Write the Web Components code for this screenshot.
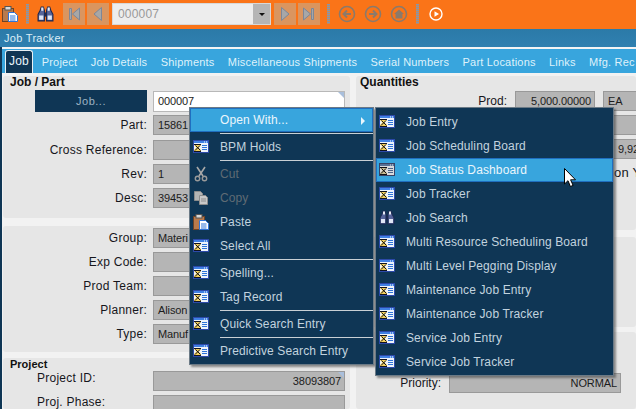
<!DOCTYPE html>
<html>
<head>
<meta charset="utf-8">
<title>Job Tracker</title>
<style>
  html, body { margin: 0; padding: 0; background: #e6e6e6; }
  body { font: 12px "Liberation Sans", Arial, sans-serif; overflow: hidden; }
</style>
</head>
<body>
<job-app>
  <job-toolbar slot="toolbar"></job-toolbar>
  <job-tabs slot="tabs" items="Job|Project|Job Details|Shipments|Miscellaneous Shipments|Serial Numbers|Part Locations|Links|Mfg. Rec"></job-tabs>

  <form-panel slot="left" heading="Job / Part" style="height:142px;margin-bottom:2px" rows="4.33" top="2">
    <field-row button="Job..." value="000007" kind="input"></field-row>
    <field-row label="Part:" value="15861"></field-row>
    <field-row label="Cross Reference:"></field-row>
    <field-row label="Rev:" value="1"></field-row>
    <field-row label="Desc:" value="39453"></field-row>
  </form-panel>
  <form-panel slot="left" style="height:126px" rows="4" top="2">
    <field-row label="Group:" value="Materi"></field-row>
    <field-row label="Exp Code:"></field-row>
    <field-row label="Prod Team:"></field-row>
    <field-row label="Planner:" value="Alison"></field-row>
    <field-row label="Type:" value="Manuf"></field-row>
  </form-panel>
  <form-panel slot="left" heading="Project" small style="flex:1" rows="4" top="1">
    <field-row label="Project ID:" value="38093807" align="right" flush></field-row>
    <field-row label="Proj. Phase:" flush></field-row>
  </form-panel>

  <form-panel slot="right" heading="Quantities" tight style="height:154px;margin-bottom:2px" rows="4" top="3">
    <qty-row label="Prod:" value="5,000.00000" uom="EA"></qty-row>
    <qty-row wide></qty-row>
    <qty-row wide text="9,92"></qty-row>
    <qty-row note="on Y"></qty-row>
  </form-panel>
  <form-panel slot="right" style="height:90px"></form-panel>
  <form-panel slot="right" style="flex:1" top="41">
    <qty-row label="Priority:" value="NORMAL" long></qty-row>
  </form-panel>

  <context-menu style="left:189px;top:107px;width:185px">
    <menu-item active arrow>Open With...</menu-item>
    <menu-sep></menu-sep>
    <menu-item icon="win">BPM Holds</menu-item>
    <menu-sep></menu-sep>
    <menu-item icon="cut" disabled>Cut</menu-item>
    <menu-item icon="copy" disabled>Copy</menu-item>
    <menu-item icon="paste">Paste</menu-item>
    <menu-item icon="win">Select All</menu-item>
    <menu-sep></menu-sep>
    <menu-item icon="win">Spelling...</menu-item>
    <menu-item icon="win">Tag Record</menu-item>
    <menu-sep></menu-sep>
    <menu-item icon="win">Quick Search Entry</menu-item>
    <menu-sep></menu-sep>
    <menu-item icon="win">Predictive Search Entry</menu-item>
  </context-menu>

  <context-menu style="left:375px;top:107px;width:239px" sub>
    <menu-item icon="win">Job Entry</menu-item>
    <menu-item icon="win">Job Scheduling Board</menu-item>
    <menu-item icon="win" active framed>Job Status Dashboard</menu-item>
    <menu-item icon="win">Job Tracker</menu-item>
    <menu-item icon="find">Job Search</menu-item>
    <menu-item icon="win">Multi Resource Scheduling Board</menu-item>
    <menu-item icon="win">Multi Level Pegging Display</menu-item>
    <menu-item icon="win">Maintenance Job Entry</menu-item>
    <menu-item icon="win">Maintenance Job Tracker</menu-item>
    <menu-item icon="win">Service Job Entry</menu-item>
    <menu-item icon="win">Service Job Tracker</menu-item>
  </context-menu>

  <mouse-cursor style="left:564px;top:168px"></mouse-cursor>
</job-app>

<script>
const FONT = '"Liberation Sans", Arial, sans-serif';

const ICONS = {
  win: `<rect x=".5" y="1.5" width="15" height="12" fill="#eef3fb" stroke="#2c49a8"/>
    <rect x="1" y="2" width="14" height="2" fill="#3f80e4"/>
    <path d="M11 3h1M13 3h1" stroke="#fff"/>
    <path d="M1 5h7v1L5.6 8.5 8 11v2H1v-2l2.4-2.5L1 6z" fill="#f3cf5a"/>
    <path d="M1 5.5h7M1 12.5h7M2.5 6.5l5 5M7 6.5l-5 5" stroke="#10131f" fill="none"/>
    <path d="M9 6.5h5M9 8.5h5M9 10.5h5" stroke="#2f74d8"/>`,
  cut: `<path d="M4 1l6 9M12 1L6 10" stroke="#a8a8a8" stroke-width="1.6" fill="none"/>
    <circle cx="4.5" cy="12.5" r="2.2" fill="none" stroke="#9a9a9a" stroke-width="1.4"/>
    <circle cx="11.5" cy="12.5" r="2.2" fill="none" stroke="#9a9a9a" stroke-width="1.4"/>`,
  copy: `<path d="M1.5 1.5h6l2 2v7h-8z" fill="#b4b4b4" stroke="#8c8c8c"/>
    <path d="M6.5 5.5h6l2 2v7h-8z" fill="#c8c8c8" stroke="#8c8c8c"/>
    <path d="M8 9h5M8 11h5" stroke="#8c8c8c"/>`,
  paste: `<rect x=".5" y="2.5" width="11" height="13" fill="#b97a4c" stroke="#6d4327"/>
    <rect x="3" y=".5" width="6" height="3.5" fill="#d8d8d8" stroke="#555"/>
    <path d="M6.5 6.5h6l3 3v6h-9z" fill="#fff" stroke="#2f74d8"/>
    <path d="M8 10h5.5M8 12h5.5M8 14h5.5" stroke="#2f74d8"/>`,
  find: `<path d="M3 4l1-3h2l1 3v10H1V8zM13 4l-1-3h-2L9 4v10h6V8z" fill="#56649a" stroke="#1d2850"/>
    <path d="M4 1.500h2v3H4zM10 1.500h2v3h-2z" fill="#e6eaf4"/>
    <path d="M7 6h2v4H7z" fill="#1d2850"/>
    <path d="M2 9h4v4H2zM10 9h4v4h-4z" fill="#dfe6f6"/>`
};

class AppIcon extends HTMLElement {
  connectedCallback() {
    const size = this.getAttribute('size') || 16;
    this.attachShadow({ mode: 'open' }).innerHTML = `
      <style>:host { display: block; width: ${size}px; height: ${size}px; } svg { display: block; }</style>
      <svg width="${size}" height="${size}" viewBox="0 0 16 16">${ICONS[this.getAttribute('name')] || ''}</svg>`;
  }
}

class JobApp extends HTMLElement {
  constructor() {
    super();
    this.attachShadow({ mode: 'open' }).innerHTML = `
      <style>
        :host { display: block; position: relative; width: 636px; height: 409px; overflow: hidden; font: 12px ${FONT}; background: #0f3655; }
        .frame { display: flex; flex-direction: column; height: 100%; }
        .title { height: 18px; line-height: 18px; padding-left: 4px; color: #dbeef8; font-size: 11px; letter-spacing: .3px;
                 background: linear-gradient(#2b7aa8, #3080b0); flex: none; box-sizing: border-box; }
        .body { flex: 1; min-height: 0; margin-left: 2px; display: flex; flex-direction: column; }
        .strip { height: 2px; background: #f4f4f4; flex: none; }
        .content { flex: 1; min-height: 0; display: flex; gap: 6px; background: #f2f2f2; padding: 3px 0 0 1px; overflow: hidden; }
        .col { display: flex; flex-direction: column; }
        .left { width: 347px; flex: none; gap: 6px; }
        .right { flex: 1; min-width: 0; gap: 5px; }
      </style>
      <div class="frame">
        <slot name="toolbar"></slot>
        <div class="title">Job Tracker</div>
        <div class="body">
          <div class="strip"></div>
          <slot name="tabs"></slot>
          <div class="content">
            <div class="col left"><slot name="left"></slot></div>
            <div class="col right"><slot name="right"></slot></div>
          </div>
        </div>
      </div>
      <slot></slot>`;
  }
}

class JobToolbar extends HTMLElement {
  constructor() {
    super();
    const nav = (d) => `<span class="nav"><svg width="16" height="18" viewBox="0 0 16 18">${d}</svg></span>`;
    const circ = (d) => `<svg class="c" width="18" height="18" viewBox="0 0 18 18"><circle cx="9" cy="9" r="7.500" fill="none" stroke="#8b7a6b" stroke-width="1.600"/>${d}</svg>`;
    this.attachShadow({ mode: 'open' }).innerHTML = `
      <style>
        :host { display: flex; align-items: center; height: 29px; flex: none; background: #fa7418; box-sizing: border-box; padding: 0 0 1px 2px; }
        .grip { width: 3px; height: 20px; flex: none; background: repeating-linear-gradient(#8495ad 0 1px, #c28a60 1px 2px); }
        .nav { width: 22px; height: 22px; flex: none; background: #da955f; display: flex; align-items: center; justify-content: center; }
        svg { display: block; flex: none; }
        .combo { width: 159px; height: 22px; flex: none; display: flex; box-sizing: border-box; background: #ededed; margin: 0 3px 0 3px; border: 1px solid #d8d8d8; }
        .combo span { flex: 1; line-height: 20px; padding-left: 5px; color: #999; letter-spacing: .2px; font-size: 12px; }
        .combo i { width: 17px; background: #b5b5b5; display: flex; align-items: center; justify-content: center; }
        .combo b { display: block; width: 0; height: 0; border: 3px solid transparent; border-top: 3px solid #111; border-bottom: 0; }
      </style>
      <app-icon name="paste" size="16"></app-icon>
      <span class="grip" style="margin-left:8px"></span>
      <app-icon name="find" size="17" style="margin-left:8px"></app-icon>
      <span style="width:9px;flex:none"></span>
      ${nav('<path d="M3.500 3.500h2v11h-2z" fill="#a7a7a7" stroke="#7d8798"/><path d="M13.500 3v12L6.500 9z" fill="#a7a7a7" stroke="#7d8798"/>')}
      <span style="width:2px;flex:none"></span>
      ${nav('<path d="M11.500 2.500v13L4 9z" fill="#a7a7a7" stroke="#7d8798"/>')}
      <span class="combo"><span>000007</span><i><b></b></i></span>
      ${nav('<path d="M4.500 2.500v13L12 9z" fill="#a7a7a7" stroke="#7d8798"/>')}
      <span style="width:2px;flex:none"></span>
      ${nav('<path d="M2.500 3v12L9.500 9z" fill="#a7a7a7" stroke="#7d8798"/><path d="M10.500 3.500h2v11h-2z" fill="#a7a7a7" stroke="#7d8798"/>')}
      <span class="grip" style="margin-left:7px"></span>
      <span style="width:8px;flex:none"></span>
      ${circ('<path d="M13 9H6M9 5.500 5.500 9 9 12.500" fill="none" stroke="#8b7a6b" stroke-width="2"/>')}
      <span style="width:8px;flex:none"></span>
      ${circ('<path d="M5 9h7M9 5.500 12.500 9 9 12.500" fill="none" stroke="#8b7a6b" stroke-width="2"/>')}
      <span style="width:8px;flex:none"></span>
      ${circ('<path d="M9 4.500 4 9h1.500v4.500h7V9H14z" fill="#8b7a6b"/>')}
      <span class="grip" style="margin-left:8px"></span>
      <span style="width:10px;flex:none"></span>
      <svg width="14" height="14" viewBox="0 0 14 14"><circle cx="7" cy="7" r="6" fill="none" stroke="#fff" stroke-width="1.400"/><path d="M5.500 4.200v5.600L10 7z" fill="#fff"/></svg>`;
  }
}

class JobTabs extends HTMLElement {
  connectedCallback() {
    const items = this.getAttribute('items').split('|');
    const root = this.attachShadow({ mode: 'open' });
    root.innerHTML = `
      <style>
        :host { display: flex; height: 24px; flex: none; background: #38a5dd; padding-left: 3px; overflow: hidden; white-space: nowrap; color: #dff2fb; font-size: 11px; letter-spacing: .2px; }
        span { padding: 0 6.700px; line-height: 27px; flex: none; }
        span.on { width: 28px; padding: 0; text-align: center; margin: 1px 2px 0 0; line-height: 20px; height: 23px; box-sizing: border-box; background: #0f3655; color: #eaf5fb;
                  border: 1px solid #e8f0f4; border-bottom: 0; border-radius: 3px 3px 0 0; font-size: 12px; }
      </style>
      ${items.map((t, i) => `<span class="${i === 0 ? 'on' : ''}">${t}</span>`).join('')}`;
  }
}

class FormPanel extends HTMLElement {
  connectedCallback() {
    const heading = this.getAttribute('heading');
    const gap = this.getAttribute('rows') || 4;
    const top = this.getAttribute('top') || 0;
    this.attachShadow({ mode: 'open' }).innerHTML = `
      <style>
        :host { display: block; background: #e6e6e6; border-radius: 3px; flex: none; overflow: hidden; box-sizing: border-box; color: #16161c; font-size: 12px; letter-spacing: .25px; }
        h3 { margin: 0; height: 12px; padding: 0 0 0 ${this.hasAttribute('tight') ? 4 : 7}px; font: bold ${this.hasAttribute('small') ? 11 : 12}px/12px ${FONT}; color: #111; letter-spacing: 0; }
        .rows { display: flex; flex-direction: column; gap: ${gap}px; margin-top: ${top}px; }
      </style>
      ${heading ? `<h3>${heading}</h3>` : ''}
      <div class="rows"><slot></slot></div>`;
  }
}

class FieldRow extends HTMLElement {
  connectedCallback() {
    const label = this.getAttribute('label') || '';
    const value = this.getAttribute('value') || '';
    const button = this.getAttribute('button');
    const input = this.getAttribute('kind') === 'input';
    const right = this.getAttribute('align') === 'right';
    const flush = this.hasAttribute('flush');
    this.attachShadow({ mode: 'open' }).innerHTML = `
      <style>
        :host { display: grid; grid-template-columns: 144px 192px; column-gap: 6px; height: ${input ? 21 : 20}px; align-items: stretch; }
        label { line-height: ${flush ? 14 : 20}px; text-align: ${flush ? 'left' : 'right'}; padding-left: ${flush ? 34 : 0}px; }
        button { margin: 0 0 0 32px; border: 0; padding: 0; background: #0f3655; color: #9db3c4; font: 11px ${FONT}; letter-spacing: .5px; height: 22px; }
        .f { position: relative; box-sizing: border-box; background: ${input ? '#fff' : '#b5b5b5'}; border: 1px solid ${input ? '#b8b8b8' : '#999'}; margin-top: ${input ? 1 : 0}px;
             font-size: 11px; letter-spacing: -.1px; line-height: 18px; padding: 0 3px 0 4px; overflow: hidden; white-space: nowrap; text-align: ${right ? 'right' : 'left'}; color: #1c1c1c; }
        .f.mark::after { content: ""; position: absolute; top: 0; right: 0; border: 3px solid #a9bfdc; border-left-color: transparent; border-bottom-color: transparent; }
      </style>
      ${button ? `<button>${button}</button>` : `<label>${label}</label>`}
      <div class="f ${input || right ? 'mark' : ''}">${value}</div>`;
  }
}

class QtyRow extends HTMLElement {
  connectedCallback() {
    const g = (n) => this.getAttribute(n) || '';
    let inner = '';
    if (this.hasAttribute('long')) {
      inner = `<label>${g('label')}</label><div class="f r" style="width:172px">${g('value')}</div>`;
    } else if (this.hasAttribute('wide')) {
      inner = `<label></label><div class="f" style="width:200px;padding-left:102px">${g('text')}</div>`;
    } else if (g('note')) {
      inner = `<label></label><span style="margin-left:99px;line-height:20px;white-space:nowrap;font-size:13px">${g('note')}</span>`;
    } else {
      inner = `<label>${g('label')}</label><div class="f r" style="width:80px">${g('value')}</div><div class="f" style="width:60px;margin-left:8px">${g('uom')}</div>`;
    }
    this.attachShadow({ mode: 'open' }).innerHTML = `
      <style>
        :host { display: flex; height: 20px; }
        label { width: ${this.hasAttribute('long') ? 85 : 151}px; flex: none; margin-right: 8px; text-align: right; line-height: 20px; letter-spacing: 0; }
        .f { box-sizing: border-box; flex: none; background: #b5b5b5; border: 1px solid #999; font-size: 11px; letter-spacing: -.1px; line-height: 18px; padding: 0 4px; white-space: nowrap; overflow: hidden; color: #1c1c1c; }
        .r { text-align: right; padding: 0 3px; }
      </style>${inner}`;
  }
}

class ContextMenu extends HTMLElement {
  constructor() {
    super();
    this.attachShadow({ mode: 'open' }).innerHTML = `
      <style>
        :host { display: flex; flex-direction: column; position: absolute; box-sizing: border-box; background: #0f3655; border: 1px solid #6b7a86;
                box-shadow: 2px 2px 2px rgba(60,60,60,.55); padding: 0 0 1px 0; z-index: 5; }
        :host([sub]) { padding: 2px 0 1px 0; z-index: 6; }
      </style><slot></slot>`;
  }
}

class MenuItem extends HTMLElement {
  connectedCallback() {
    const icon = this.getAttribute('icon');
    this.attachShadow({ mode: 'open' }).innerHTML = `
      <style>
        :host { display: flex; align-items: center; height: 24px; flex: none; box-sizing: border-box; color: #c2d3df; font-size: 12px; letter-spacing: .12px; white-space: nowrap; padding-left: 3px; position: relative; }
        :host([active]) { background: #38a5dd; color: #eaf6fc; border: 1px solid #1f6fc0; padding-left: 2px; }
        :host([disabled]) { color: #5f6b74; }
        :host([framed]) .ico { filter: grayscale(.6) brightness(.9); }
        .ico { width: 16px; height: 16px; flex: none; margin-right: 11px; }
        .arrow { position: absolute; right: 7px; top: 8px; border: 4px solid transparent; border-left: 4px solid #eaf6fc; border-right: 0; }
      </style>
      <span class="ico">${icon ? `<app-icon name="${icon}"></app-icon>` : ''}</span>
      <span><slot></slot></span>
      ${this.hasAttribute('arrow') ? '<span class="arrow"></span>' : ''}`;
  }
}

class MenuSep extends HTMLElement {
  constructor() {
    super();
    this.attachShadow({ mode: 'open' }).innerHTML = `
      <style>:host { display: block; height: 1px; margin: 1px 0 1px 30px; background: #c9d0d5; flex: none; }</style>`;
  }
}

class MouseCursor extends HTMLElement {
  constructor() {
    super();
    this.attachShadow({ mode: 'open' }).innerHTML = `
      <style>:host { display: block; position: absolute; width: 12px; height: 20px; z-index: 9; } svg { display: block; }</style>
      <svg width="12" height="20" viewBox="0 0 12 20"><path d="M.5.500v15.500l3.500-3.300 2.400 5.800 2.700-1.100-2.500-5.600h4.900z" fill="#fff" stroke="#000"/></svg>`;
  }
}

customElements.define('app-icon', AppIcon);
customElements.define('job-app', JobApp);
customElements.define('job-toolbar', JobToolbar);
customElements.define('job-tabs', JobTabs);
customElements.define('form-panel', FormPanel);
customElements.define('field-row', FieldRow);
customElements.define('qty-row', QtyRow);
customElements.define('context-menu', ContextMenu);
customElements.define('menu-item', MenuItem);
customElements.define('menu-sep', MenuSep);
customElements.define('mouse-cursor', MouseCursor);
</script>
</body>
</html>
